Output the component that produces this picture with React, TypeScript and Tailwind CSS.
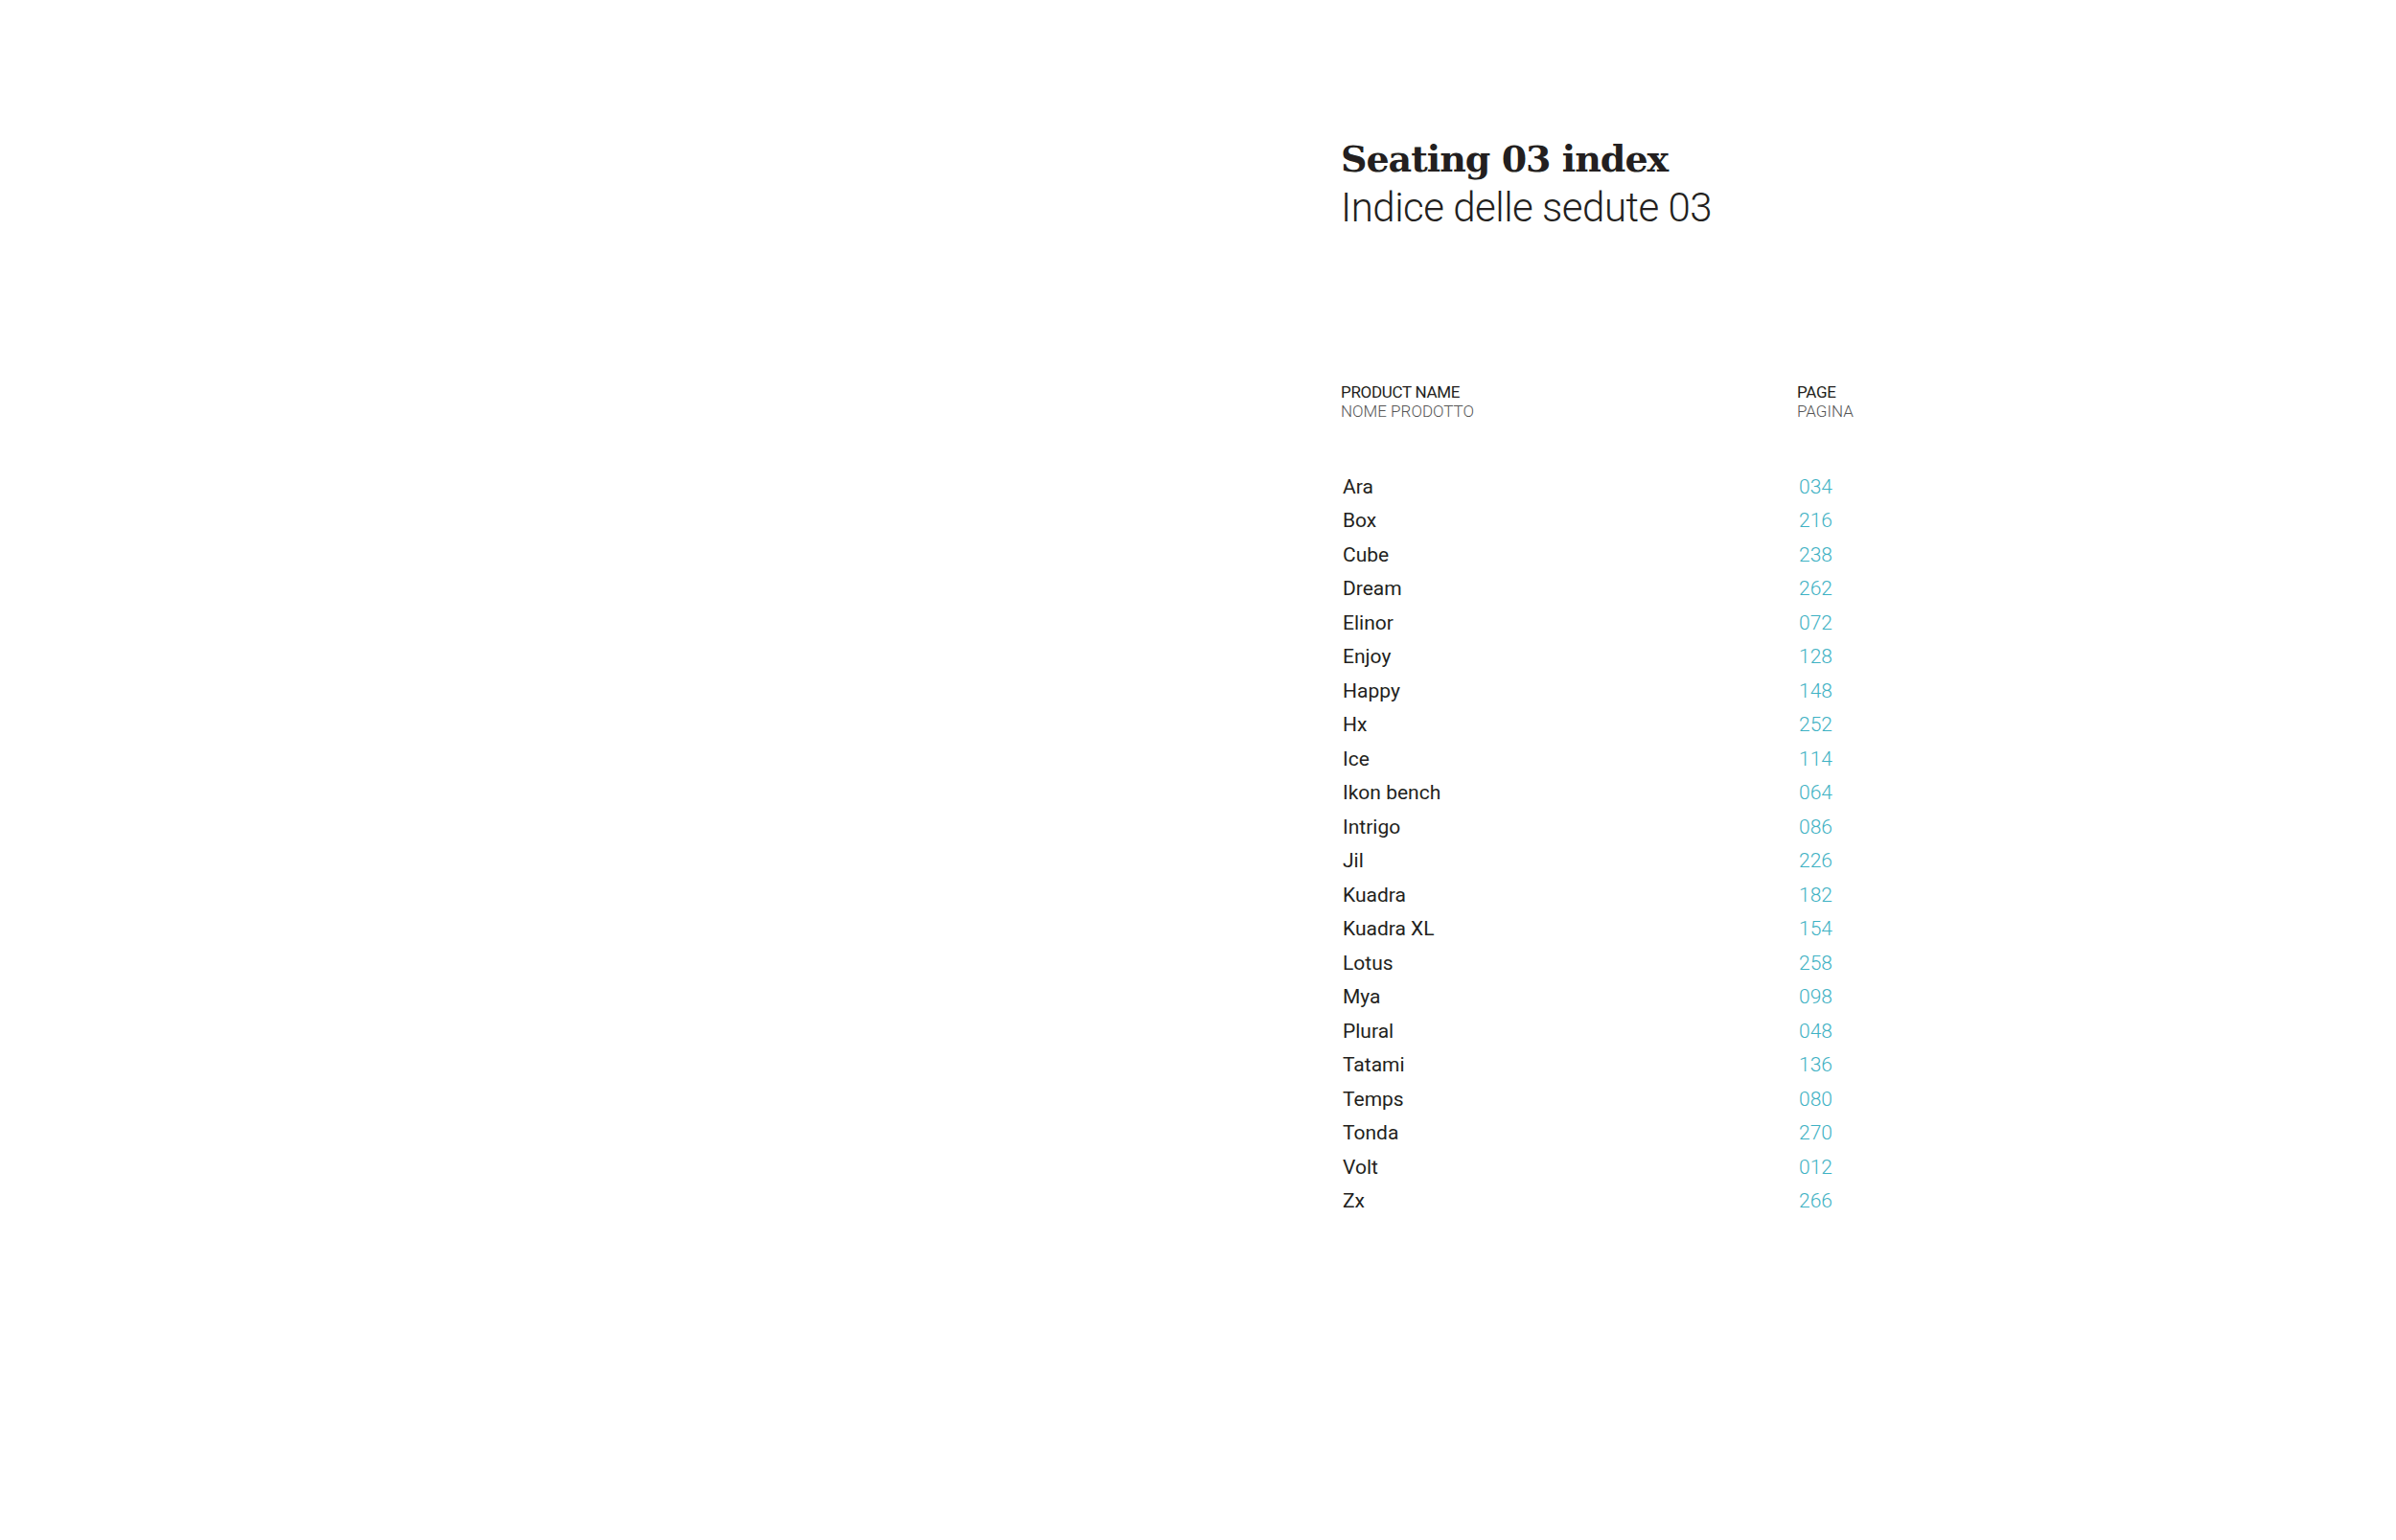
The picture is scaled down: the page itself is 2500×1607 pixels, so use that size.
import React from "react";

const rows: [string, string][] = [
  ["Ara", "034"],
  ["Box", "216"],
  ["Cube", "238"],
  ["Dream", "262"],
  ["Elinor", "072"],
  ["Enjoy", "128"],
  ["Happy", "148"],
  ["Hx", "252"],
  ["Ice", "114"],
  ["Ikon bench", "064"],
  ["Intrigo", "086"],
  ["Jil", "226"],
  ["Kuadra", "182"],
  ["Kuadra XL", "154"],
  ["Lotus", "258"],
  ["Mya", "098"],
  ["Plural", "048"],
  ["Tatami", "136"],
  ["Temps", "080"],
  ["Tonda", "270"],
  ["Volt", "012"],
  ["Zx", "266"],
];

export default function App() {
  return (
    <div className="grid min-h-[1607px] w-[2500px] grid-cols-2 bg-white font-['Roboto',sans-serif]">
      <div />
      <div className="pl-[149px] pt-[142px]">
        <h1 className="font-['DejaVu_Serif',serif] text-[38px] leading-[48px] font-bold tracking-[-1px] text-[#231f20]">
          Seating 03 index
        </h1>
        <p className="mt-[3px] text-[42px] leading-[48px] font-light text-[#231f20] tracking-[-0.5px]">
          Indice delle sedute 03
        </p>

        <div className="mt-[158px] grid grid-cols-[476px_auto] text-[17px] leading-[20px]">
          <div>
            <div className="font-normal text-[#231f20] tracking-[-0.3px]">PRODUCT NAME</div>
            <div className="font-light text-[#555]">NOME PRODOTTO</div>
          </div>
          <div>
            <div className="font-normal text-[#231f20] tracking-[-0.3px]">PAGE</div>
            <div className="font-light text-[#555]">PAGINA</div>
          </div>
        </div>

        <ul className="mt-[52px] pl-[2px]">
          {rows.map(([name, page]) => (
            <li key={name} className="grid grid-cols-[476px_auto] text-[21px] leading-[35.48px]">
              <span className="text-[#231f20]">{name}</span>
              <span className="font-light text-[#3fb2c4]">{page}</span>
            </li>
          ))}
        </ul>
      </div>
    </div>
  );
}
